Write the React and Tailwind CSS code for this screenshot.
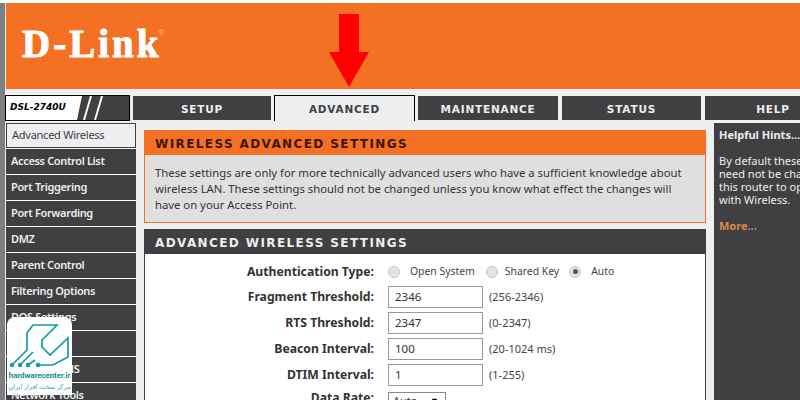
import React from 'react';

const menu = ['Access Control List', 'Port Triggering', 'Port Forwarding', 'DMZ', 'Parent Control', 'Filtering Options', 'DOS Settings', 'DNS', 'Dynamic DNS', 'Network Tools'];

const fields = [
  { label: 'Fragment Threshold:', value: '2346', range: '(256-2346)' },
  { label: 'RTS Threshold:', value: '2347', range: '(0-2347)' },
  { label: 'Beacon Interval:', value: '100', range: '(20-1024 ms)' },
  { label: 'DTIM Interval:', value: '1', range: '(1-255)' },
];

const Radio = ({ checked }) => (
  <span className="w-[12px] h-[12px] rounded-full border border-[#c4c4c4] bg-[#e4e4e4] flex items-center justify-center shrink-0">
    {checked && <span className="w-[5px] h-[5px] rounded-full bg-[#555]" />}
  </span>
);

const Tab = ({ children, className }) => (
  <div className={`h-[24px] mb-px pt-[4px] shrink-0 flex items-center justify-center bg-[#404042] text-[#eeeeee] font-bold text-[10.5px] tracking-[0.8px] font-['DejaVu_Sans',sans-serif] ${className}`}>
    {children}
  </div>
);

const App = () => {
  return (
    <div className="w-[800px] h-[400px] overflow-hidden relative flex bg-[#eeeff1] font-['Noto_Sans',sans-serif]">
      <div className="w-[5px] shrink-0 bg-[#7f7f7f]" />

      <div className="w-[795px] shrink-0 flex flex-col">
        <div className="h-[3px] shrink-0 -ml-[5px] bg-white" />
        <div className="h-[86px] ml-px shrink-0 bg-[#f47023] flex items-center relative">
          <div className="pl-[16px] -mt-[6px] text-[39px] leading-none font-bold text-white tracking-[3px] [-webkit-text-stroke:1px_white] font-['Liberation_Serif',serif]">
            D-Link
          </div>
          <span className="text-[7px] leading-none text-[#f5c9a8] -mt-[28px] -ml-[3px]">®</span>
          <svg className="absolute left-[323px] top-[11px]" width="40" height="73" viewBox="0 0 40 73">
            <path d="M10 0H30V38H40L20 73L0 38H10Z" fill="#ff0000" />
          </svg>
        </div>

        <div className="flex items-end h-[32px] shrink-0 overflow-hidden">
          <div className="w-[125px] h-[26px] shrink-0 border border-black bg-[#404042] flex overflow-hidden">
            <span className="w-[71px] shrink-0 bg-white text-black italic font-bold text-[9px] pl-[4px] flex items-center font-['DejaVu_Sans',sans-serif]">DSL-2740U</span>
            <svg width="40" height="24" viewBox="0 0 40 24" className="shrink-0">
              <path d="M0 24L5 0H0Z" fill="#fff" />
              <path d="M6 24L13 0H15L8 24Z" fill="#fff" />
              <path d="M17 24L24 0H26L19 24Z" fill="#fff" />
            </svg>
          </div>
          <Tab className="w-[138px] ml-[3px]">SETUP</Tab>
          <div className="w-[141px] h-[26px] pt-[3px] ml-[3px] shrink-0 border border-b-0 border-black bg-[#eeeff1] flex items-center justify-center text-[#404042] font-bold text-[10.5px] tracking-[0.8px] font-['DejaVu_Sans',sans-serif]">ADVANCED</div>
          <Tab className="w-[140px] ml-[3px]">MAINTENANCE</Tab>
          <Tab className="w-[139px] ml-[4px]">STATUS</Tab>
          <Tab className="w-[136px] ml-[4px]">HELP</Tab>
        </div>

        <div className="flex flex-1 min-h-0 pt-[2px]">
          <div className="w-[130px] ml-px shrink-0 flex flex-col">
            <div className="h-[26px] shrink-0 pb-px">
              <div className="h-[25px] border border-[#404042] bg-[#eeeff1] text-[#404042] text-[11px] tracking-[-0.25px] pl-[5px] flex items-center">Advanced Wireless</div>
            </div>
            {menu.map((item) => (
              <div key={item} className="h-[26px] shrink-0 bg-[#404042] border-b border-white text-[#eeeeee] font-semibold text-[11px] tracking-[-0.35px] pl-[5px] flex items-center">{item}</div>
            ))}
          </div>

          <div className="w-[562px] ml-[8px] mt-[7px] shrink-0 flex flex-col">
            <div className="h-[25px] pt-[2px] shrink-0 bg-[#f47023] text-[#3c1508] font-bold text-[12px] tracking-[1.4px] pl-[11px] flex items-center font-['DejaVu_Sans',sans-serif]">WIRELESS ADVANCED SETTINGS</div>
            <div className="h-[68px] shrink-0 bg-[#dfdfdf] border border-t-0 border-[#f47023] text-[#333] text-[11.3px] leading-[16px] pl-[10px] pt-[10px] whitespace-nowrap">
              <p>These settings are only for more technically advanced users who have a sufficient knowledge about<br />wireless LAN. These settings should not be changed unless you know what effect the changes will<br />have on your Access Point.</p>
            </div>
            <div className="h-[25px] pt-[2px] mt-[6px] shrink-0 bg-[#404042] text-[#eeeeee] font-bold text-[12px] tracking-[1.4px] pl-[11px] flex items-center font-['DejaVu_Sans',sans-serif]">ADVANCED WIRELESS SETTINGS</div>
            <div className="flex-1 bg-white border-x border-[#404042] pt-[8px] flex flex-col gap-[4px]">
              <div className="h-[20px] shrink-0 flex items-center">
                <span className="w-[229px] text-right font-bold text-[12.2px] text-[#333]">Authentication Type:</span>
                <div className="flex items-center ml-[14px] text-[10.4px] text-[#444]">
                  <Radio /><span className="ml-[10px] mr-[11px]">Open System</span>
                  <Radio /><span className="ml-[7px] mr-[10px]">Shared Key</span>
                  <Radio checked /><span className="ml-[10px]">Auto</span>
                </div>
              </div>
              {fields.map((f) => (
                <div key={f.label} className="h-[22px] shrink-0 flex items-center">
                  <span className="w-[229px] text-right font-bold text-[12.2px] text-[#333]">{f.label}</span>
                  <div className="w-[95px] h-[22px] ml-[14px] border border-[#999] bg-white text-[#333] text-[11.5px] pl-[6px] flex items-center">{f.value}</div>
                  <span className="ml-[6px] text-[11px] text-[#444]">{f.range}</span>
                </div>
              ))}
              <div className="h-[22px] -mt-[3px] shrink-0 flex items-center">
                <span className="w-[229px] text-right font-bold text-[12.2px] text-[#333]">Data Rate:</span>
                <div className="w-[58px] h-[18px] ml-[14px] mt-[6px] border border-[#888] bg-white text-[#333] text-[11px] pl-[4px] flex items-center justify-between pr-[6px]">
                  <span>Auto</span><span className="text-[9px] text-black">▼</span>
                </div>
              </div>
            </div>
          </div>

          <div className="ml-[8px] flex-1 bg-[#404042] text-[#eeeeee] text-[11px] leading-[13px] pl-[5px] pt-[5px] overflow-hidden whitespace-nowrap">
            <div className="font-bold">Helpful Hints...</div>
            <div className="mt-[13px]">By default these<br />need not be changed<br />this router to operate<br />with Wireless.</div>
            <div className="mt-[13px] font-bold text-[#d98a4b]">More...</div>
          </div>
        </div>
      </div>

      {/* watermark badge */}
      <div className="absolute left-[7px] top-[317px] w-[65px] h-[78px] bg-white rounded-t-[8px] flex flex-col items-center overflow-hidden">
        <svg width="65" height="52" viewBox="0 0 65 52" className="shrink-0" fill="none" stroke="#0f9ca3" strokeWidth="1.7">
          <path d="M5 48L20 33V16L26 8H50L35 23V30L43 38L61 21V40L46 48H31" />
          <path d="M13 48L26 35" />
          <path d="M21 48L28 43" />
          <circle cx="5" cy="48" r="2.2" fill="#0f9ca3" stroke="none" />
          <circle cx="13" cy="48" r="2.2" fill="#0f9ca3" stroke="none" />
          <circle cx="21" cy="48" r="2.2" fill="#0f9ca3" stroke="none" />
          <circle cx="31" cy="48" r="2.2" fill="#0f9ca3" stroke="none" />
        </svg>
        <div className="mt-[2px] text-[8px] leading-[10px] font-bold text-[#0f8f97] whitespace-nowrap tracking-[-0.1px] font-['Roboto',sans-serif]">hardwarecenter.ir</div>
        <div dir="rtl" className="text-[6.5px] leading-[11px] text-[#33a6ad] whitespace-nowrap font-['Noto_Sans','DejaVu_Sans',sans-serif]">مرکز سخت افزار ایران</div>
      </div>
    </div>
  );
};

export default App;
